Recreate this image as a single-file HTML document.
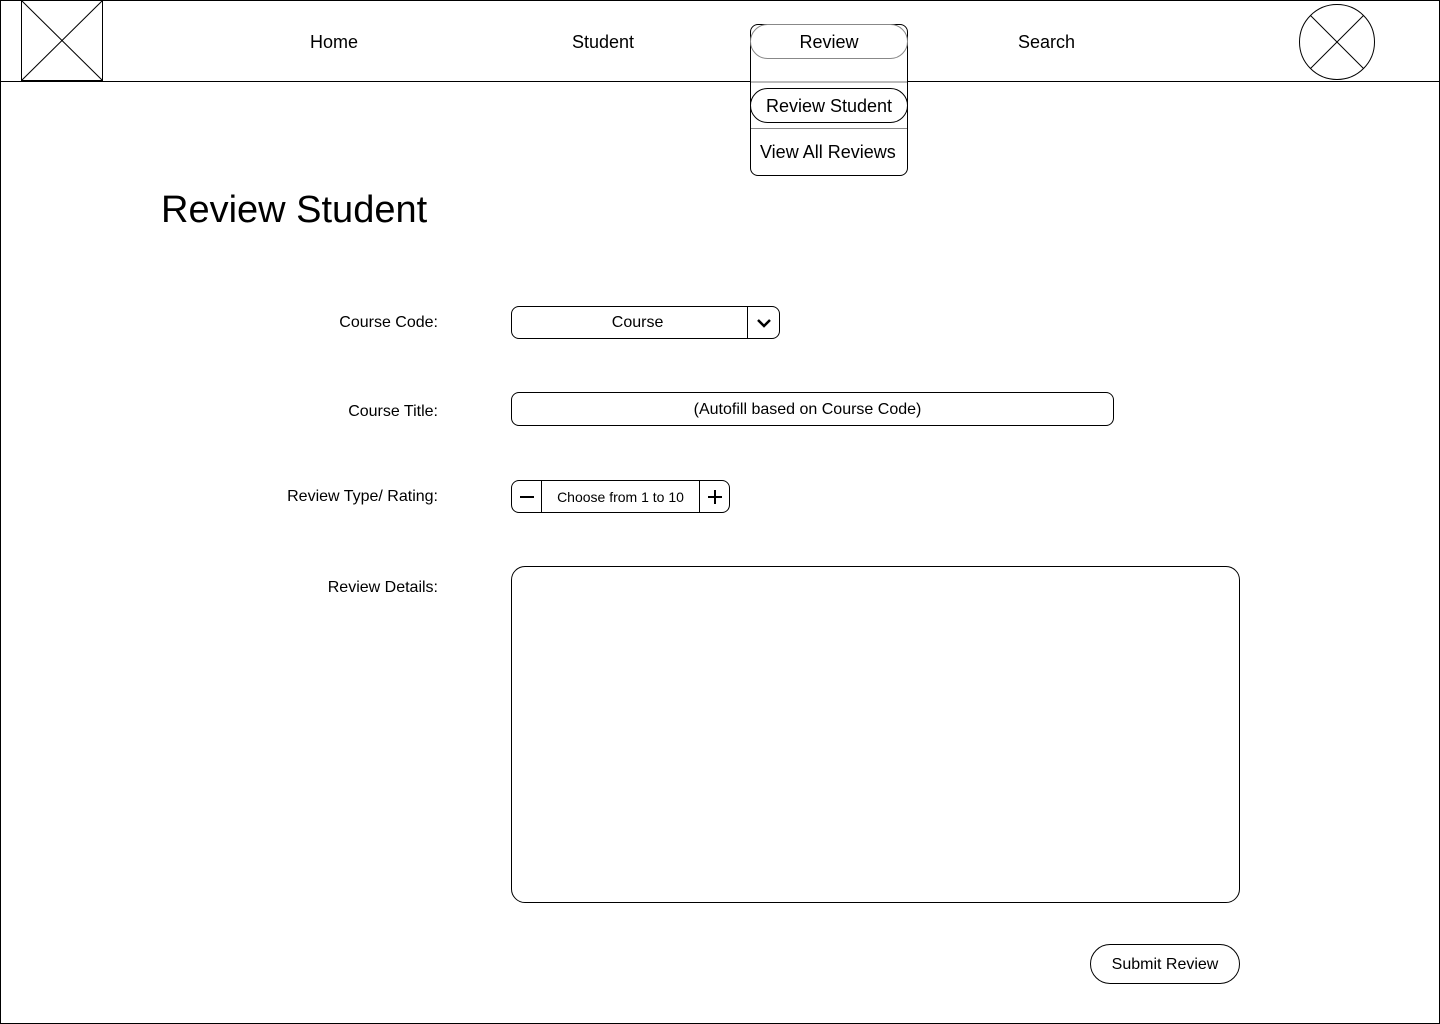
<!DOCTYPE html>
<html><head><meta charset="utf-8"><style>
*{box-sizing:border-box;margin:0;padding:0}
body{width:1440px;height:1024px;position:relative;background:#fff;font-family:"Liberation Sans",sans-serif;color:#000;overflow:hidden}
.a{position:absolute}
.frame{left:0;top:0;width:1440px;height:1024px;border:1px solid #000}
.nav{font-size:18px}
.lbl{font-size:16px;text-align:right;width:300px;left:138px}
.box{border:1px solid #000;border-radius:8px;font-size:16px;display:flex;align-items:center;justify-content:center}
</style></head><body>
<div class="a frame"></div>
<div class="a" style="left:0;top:81px;width:1440px;height:1px;background:#000"></div>
<svg class="a" style="left:21px;top:0" width="82" height="82"><rect x="0.5" y="0.5" width="81" height="80" fill="none" stroke="#000"/><line x1="0" y1="0" x2="82" y2="81" stroke="#000"/><line x1="82" y1="0" x2="0" y2="81" stroke="#000"/></svg>
<svg class="a" style="left:1298px;top:3px" width="78" height="78"><circle cx="39" cy="39" r="37.5" fill="none" stroke="#000"/><line x1="12.5" y1="12.5" x2="65.5" y2="65.5" stroke="#000"/><line x1="65.5" y1="12.5" x2="12.5" y2="65.5" stroke="#000"/></svg>
<div class="a nav" style="left:310px;top:32px">Home</div>
<div class="a nav" style="left:572px;top:32px">Student</div>
<div class="a nav" style="left:1018px;top:32px">Search</div>
<div class="a" style="left:750px;top:24px;width:158px;height:152px;border:1px solid #000;border-radius:8px;background:#fff"></div>
<div class="a box" style="left:750px;top:24px;width:158px;height:35px;border-color:#888;border-radius:18px;font-size:18px;padding-top:2px">Review</div>
<div class="a" style="left:751px;top:81px;width:156px;height:2px;background:#bbb"></div>
<div class="a box" style="left:750px;top:88px;width:158px;height:35px;border-radius:18px;font-size:18px;padding-top:2px">Review Student</div>
<div class="a" style="left:751px;top:128px;width:156px;height:1px;background:#888"></div>
<div class="a" style="left:760px;top:142px;font-size:18px">View All Reviews</div>
<div class="a" style="left:161px;top:189px;font-size:38px">Review Student</div>
<div class="a lbl" style="top:314px">Course Code:</div>
<div class="a lbl" style="top:403px">Course Title:</div>
<div class="a lbl" style="top:488px">Review Type/ Rating:</div>
<div class="a lbl" style="top:579px">Review Details:</div>
<div class="a box" style="left:511px;top:306px;width:269px;height:33px;justify-content:flex-start"><span style="width:236px;text-align:center;padding-left:16px;padding-top:1px">Course</span><span style="border-left:1px solid #000;height:31px;width:32px;display:flex;align-items:center;justify-content:center"><svg width="16" height="10"><path d="M2 2 L8 8 L14 2" fill="none" stroke="#000" stroke-width="2.5"/></svg></span></div>
<div class="a box" style="left:511px;top:392px;width:603px;height:34px;padding-right:10px;padding-top:1px">(Autofill based on Course Code)</div>
<div class="a box" style="left:511px;top:480px;width:219px;height:33px;justify-content:flex-start;font-size:14px"><span style="width:30px;height:31px;border-right:1px solid #000;display:flex;align-items:center;justify-content:center"><svg width="16" height="16"><line x1="1" y1="8" x2="15" y2="8" stroke="#000" stroke-width="2"/></svg></span><span style="width:157px;text-align:center">Choose from 1 to 10</span><span style="width:30px;height:31px;border-left:1px solid #000;display:flex;align-items:center;justify-content:center"><svg width="16" height="16"><line x1="1" y1="8" x2="15" y2="8" stroke="#000" stroke-width="2"/><line x1="8" y1="1" x2="8" y2="15" stroke="#000" stroke-width="2"/></svg></span></div>
<div class="a" style="left:511px;top:566px;width:729px;height:337px;border:1px solid #000;border-radius:14px"></div>
<div class="a box" style="left:1090px;top:944px;width:150px;height:40px;border-radius:20px;padding-top:2px">Submit Review</div>
</body></html>
